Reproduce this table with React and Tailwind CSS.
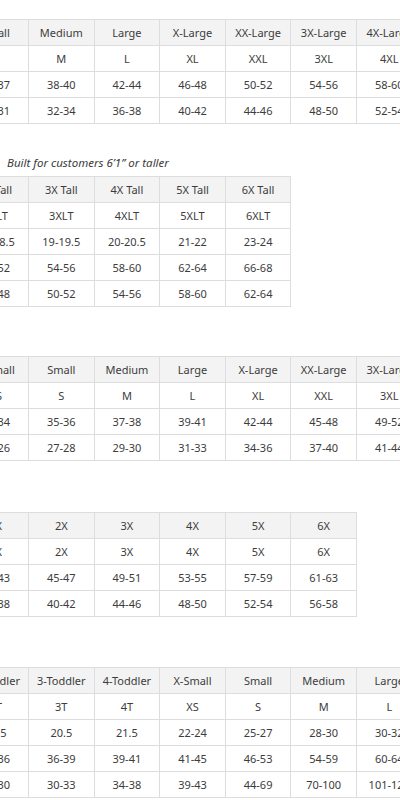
import React from 'react';

// Size charts, scrolled sideways so the first column is partly hidden
const tables = [
  {
    rows: [
      ['Small', 'Medium', 'Large', 'X-Large', 'XX-Large', '3X-Large', '4X-Large', '5X-Large'],
      ['S', 'M', 'L', 'XL', 'XXL', '3XL', '4XL', '5XL'],
      ['34-37', '38-40', '42-44', '46-48', '50-52', '54-56', '58-60', '62-64'],
      ['28-31', '32-34', '36-38', '40-42', '44-46', '48-50', '52-54', '56-58'],
    ],
  },
  {
    note: 'Built for customers 6’1” or taller',
    rows: [
      ['2X Tall', '3X Tall', '4X Tall', '5X Tall', '6X Tall'],
      ['2XLT', '3XLT', '4XLT', '5XLT', '6XLT'],
      ['18-18.5', '19-19.5', '20-20.5', '21-22', '23-24'],
      ['50-52', '54-56', '58-60', '62-64', '66-68'],
      ['46-48', '50-52', '54-56', '58-60', '62-64'],
    ],
  },
  {
    rows: [
      ['X-Small', 'Small', 'Medium', 'Large', 'X-Large', 'XX-Large', '3X-Large', '4X-Large'],
      ['XS', 'S', 'M', 'L', 'XL', 'XXL', '3XL', '4XL'],
      ['32-34', '35-36', '37-38', '39-41', '42-44', '45-48', '49-52', '53-56'],
      ['25-26', '27-28', '29-30', '31-33', '34-36', '37-40', '41-44', '45-48'],
    ],
  },
  {
    rows: [
      ['1X', '2X', '3X', '4X', '5X', '6X'],
      ['1X', '2X', '3X', '4X', '5X', '6X'],
      ['41-43', '45-47', '49-51', '53-55', '57-59', '61-63'],
      ['36-38', '40-42', '44-46', '48-50', '52-54', '56-58'],
    ],
  },
  {
    rows: [
      ['2-Toddler', '3-Toddler', '4-Toddler', 'X-Small', 'Small', 'Medium', 'Large', 'X-Large'],
      ['2T', '3T', '4T', 'XS', 'S', 'M', 'L', 'XL'],
      ['19.5', '20.5', '21.5', '22-24', '25-27', '28-30', '30-32', '33-35'],
      ['33-36', '36-39', '39-41', '41-45', '46-53', '54-59', '60-64', '65-70'],
      ['27-30', '30-33', '34-38', '39-43', '44-69', '70-100', '101-125', '126-150'],
    ],
  },
];

function SizeTable({ rows }) {
  return (
    <div className="overflow-hidden">
      <table className="ml-[-37.6px] table-fixed border-collapse">
        <tbody>
          {rows.map((row, i) => (
            <tr key={i} className={i === 0 ? 'bg-[#f3f3f3]' : 'bg-white'}>
              {row.map((cell, j) => (
                <td
                  key={j}
                  className="w-[65.6px] min-w-[65.6px] h-[26px] border border-[#dddddd] p-0 text-center align-middle whitespace-nowrap"
                >
                  {cell}
                </td>
              ))}
            </tr>
          ))}
        </tbody>
      </table>
    </div>
  );
}

export default function App() {
  return (
    <div className="w-[400px] h-[800px] overflow-hidden bg-white pt-[19px] text-[11px] leading-none text-[#3c3c3c] font-['Noto_Sans','Open_Sans',sans-serif]">
      <SizeTable rows={tables[0].rows} />

      <p className="mt-[31px] pl-[7px] italic text-[11.5px] leading-[16px]">{tables[1].note}</p>
      <div className="mt-[5px]">
        <SizeTable rows={tables[1].rows} />
      </div>

      <div className="mt-[49px]">
        <SizeTable rows={tables[2].rows} />
      </div>

      <div className="mt-[51px]">
        <SizeTable rows={tables[3].rows} />
      </div>

      <div className="mt-[50px]">
        <SizeTable rows={tables[4].rows} />
      </div>
    </div>
  );
}
